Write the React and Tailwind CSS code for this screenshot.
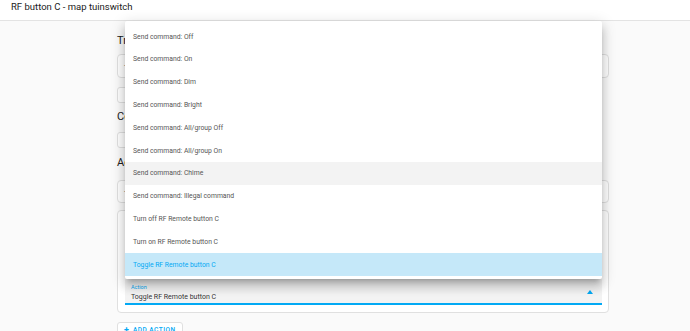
import React from "react";

const items = [
  "Send command: Off",
  "Send command: On",
  "Send command: Dim",
  "Send command: Bright",
  "Send command: All/group Off",
  "Send command: All/group On",
  "Send command: Chime",
  "Send command: Illegal command",
  "Turn off RF Remote button C",
  "Turn on RF Remote button C",
  "Toggle RF Remote button C",
];

function Heading({ text }) {
  return (
    <div className="flex items-center justify-between h-[14px] pr-[7px]">
      <span className="text-[11px] leading-[14px] text-[#212121]">{text}</span>
      <span className="w-[9px] h-[9px] rounded-full bg-[#444]" />
    </div>
  );
}

export default function App() {
  return (
    <div
      className="relative w-[690px] h-[331px] overflow-hidden bg-[#fafafa]"
      style={{ fontFamily: "Roboto, 'Liberation Sans', sans-serif" }}
    >
      <div className="h-[21px] bg-white border-b border-[#e3e3e3] pl-[11px]">
        <span className="block text-[9.5px] leading-[14px] text-[#212121]">
          RF button C - map tuinswitch
        </span>
      </div>

      <div className="ml-[117px] w-[492px] pt-[13px] flex flex-col">
        <Heading text="Triggers" />
        <div className="mt-[6px] h-[24px] rounded-[4px] border border-[#e0e0e0] bg-white flex items-center pl-[6px]">
          <span className="text-[8px] text-[#333]">+</span>
        </div>
        <div className="mt-[9px] h-[16px] w-[66px] rounded-[3px] border border-[#e0e0e0] bg-white" />
        <div className="mt-[7px]">
          <Heading text="Conditions" />
        </div>
        <div className="mt-[8px] h-[16px] w-[66px] rounded-[3px] border border-[#e0e0e0] bg-white" />
        <div className="mt-[8px]">
          <Heading text="Actions" />
        </div>
        <div className="mt-[10px] h-[23px] rounded-[4px] border border-[#e0e0e0] bg-white flex items-center pl-[6px]">
          <span className="text-[8px] text-[#333]">+</span>
        </div>
        <div className="mt-[7px] h-[103px] rounded-[4px] border border-[#e0e0e0] bg-white flex flex-col justify-end pl-[7px] pr-[6px] pb-[7px]">
          <div className="h-[26px] bg-[#f3f3f3] border-b-2 border-[#03a9f4] flex items-start justify-between pl-[6px] pr-[9px]">
            <div className="flex flex-col">
              <span className="text-[5.5px] leading-[7px] mt-[5px] text-[#03a9f4]">Action</span>
              <span className="text-[7px] leading-[10px] mt-[0.5px] text-[#333]">Toggle RF Remote button C</span>
            </div>
            <svg width="6" height="4" viewBox="0 0 6 4" className="mt-[11px]">
              <path d="M0 4 L3 0 L6 4 Z" fill="#03a9f4" />
            </svg>
          </div>
        </div>
        <div className="mt-[9px] h-[20px] w-[66px] rounded-[3px] border border-[#e0e0e0] bg-white pl-[6px] pt-[2px] flex gap-[4px]">
          <span className="text-[9px] leading-[10px] text-[#03a9f4] font-bold">+</span>
          <span className="text-[6.5px] leading-[10px] tracking-[0.5px] text-[#03a9f4] font-medium">ADD ACTION</span>
        </div>
      </div>

      <div className="absolute left-[125px] top-[21px] w-[477px] h-[258px] bg-white rounded-[2px] pt-[4.4px] shadow-[0_5px_5px_-3px_rgba(0,0,0,0.2),0_8px_10px_1px_rgba(0,0,0,0.14),0_3px_14px_2px_rgba(0,0,0,0.12)]">
        {items.map((t, i) => (
          <div
            key={t}
            className={
              "h-[22.8px] flex items-center pl-[8px] text-[6.8px] " +
              (i === 6
                ? "bg-[#f3f3f3] text-[#555]"
                : i === 10
                ? "bg-[#c5e8f9] text-[#03a9f4]"
                : "text-[#555]")
            }
          >
            {t}
          </div>
        ))}
      </div>
    </div>
  );
}
